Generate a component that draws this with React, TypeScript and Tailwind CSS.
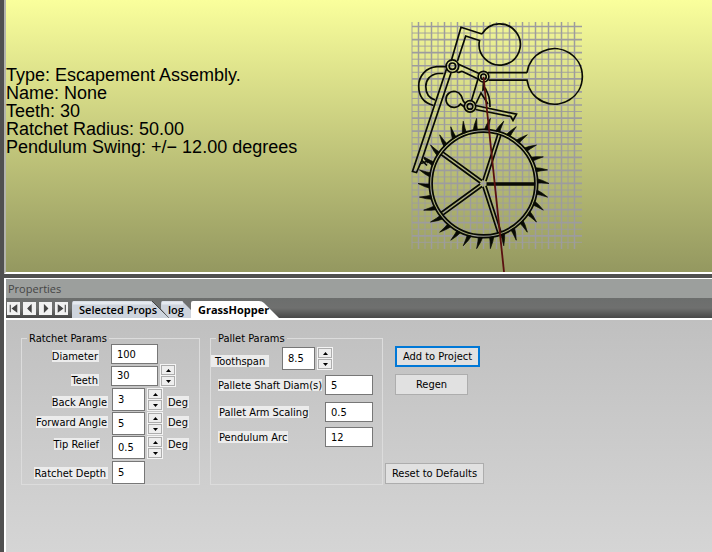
import { type ReactNode } from "react";

const ink = { fill: "none", stroke: "#080a04", strokeWidth: 1.7 };
const CX = 483.5;
const CY = 183.5;

function polar(r: number, deg: number): string {
  const a = (deg * Math.PI) / 180;
  return `${(CX + r * Math.cos(a)).toFixed(2)} ${(CY + r * Math.sin(a)).toFixed(2)}`;
}

function Grid() {
  const columns = Array.from({ length: 26 }, (_, i) => 412 + i * 6.5);
  const rows = Array.from({ length: 34 }, (_, i) => 26.5 + i * 6.54);
  return (
    <g stroke="#9d9c9e">
      {rows.map((y, i) => (
        <path key={`r${i}`} d={`M412 ${y}H582`} strokeWidth={i % 2 === 0 ? 1.7 : 0.9} />
      ))}
      {columns.map((x, i) => (
        <path key={`c${i}`} d={`M${x} 22V249`} strokeWidth={i % 2 === 1 ? 1.5 : 0.9} />
      ))}
    </g>
  );
}

function Ratchet() {
  const teeth = Array.from({ length: 30 }, (_, i) => i * 12);
  const spokes = [0, 72, 144, 216, 288];
  return (
    <g>
      <circle cx={CX} cy={CY} r={54.2} {...ink} />
      <circle cx={CX} cy={CY} r={51.4} {...ink} />
      {teeth.map((t) => (
        <path
          key={t}
          fill="#080a04"
          stroke="#080a04"
          strokeWidth={0.7}
          d={`M${polar(65.5, t)}L${polar(59, t - 3)}L${polar(54, t - 5)}L${polar(54, t - 0.5)}L${polar(58, t - 0.5)}Z`}
        />
      ))}
      {spokes.map((s) => (
        <g key={s} transform={`rotate(${s} ${CX} ${CY})`}>
          {s === 0 ? (
            <path d={`M${CX + 3} ${CY + 0.5}H${CX + 51.5}`} {...ink} strokeWidth={3.4} />
          ) : (
            <path d={`M${CX + 3} ${CY - 1.6}H${CX + 51.5}M${CX + 3} ${CY + 1.6}H${CX + 51.5}`} {...ink} />
          )}
        </g>
      ))}
    </g>
  );
}

function Escapement() {
  return (
    <svg viewBox="400 0 200 272" className="h-[272px] w-[200px] shrink-0" role="img" aria-label="Escapement assembly">
      <Grid />
      <Ratchet />
      <g {...ink}>
        <path d="M527 72.6A27.8 27.8 0 1 1 527 80.2H488.5M527 72.6H488" />
        <path d="M482 34A20.6 20.6 0 1 1 479.5 40.5L465.7 36L457.5 61M482 34L461 27.3L451.5 60" />
        <circle cx="452.4" cy="66.2" r="6.3" />
        <circle cx="452.4" cy="66.2" r="3.2" />
        <circle cx="483.5" cy="76.7" r="5.4" />
        <circle cx="483.5" cy="76.7" r="2.7" />
        <circle cx="470" cy="106.4" r="5.7" />
        <circle cx="470" cy="106.4" r="2.8" />
        <path d="M446.500 69L412.500 171.500L416.500 172.500L421.500 161L451 73" />
        <path d="M421.500 160L427 165.500M424 158L428.500 163M421 163.500L428 161" />
        <path d="M446 66.700H437C426 67.500 418.700 76 418.700 86C418.700 96 424 103 433.500 105.500" />
        <path d="M443.500 73.500H438C430 74.500 425.800 80 425.800 86.500C425.800 93 429 98 435 100" />
        <path d="M458 64L479 73.500M456.500 71.500C459 74 460 70.500 462.500 71.500L478 79L471.500 100.500" />
        <path d="M465 103C462.500 101.500 463 99 461 95.500A8 8 0 1 0 460.500 104L464.500 107" />
        <path d="M475.500 105.500L516.500 114.200L513 120.500L510.800 116.500L475.500 109.500" />
        <path d="M476 103.500L481 93L488 104M483.500 82.500L483 90L485.500 88.500C488.500 95 490 98 490 107" />
      </g>
      <path d="M483.500 77L504 272" fill="none" stroke="#5a1010" strokeWidth="1.800" />
    </svg>
  );
}

function Label({ htmlFor, children, className = "" }: { htmlFor: string; children: ReactNode; className?: string }) {
  return (
    <label htmlFor={htmlFor} className={`h-3 shrink-0 whitespace-nowrap bg-[#ececec] leading-[13px] ${className}`}>
      {children}
    </label>
  );
}

function Field({ id, value, className }: { id: string; value: string; className: string }) {
  return (
    <input
      id={id}
      defaultValue={value}
      className={`shrink-0 rounded-none border border-[#777] bg-white px-[5px] outline-none ${className}`}
    />
  );
}

function Spin({ name }: { name: string }) {
  return (
    <span className="ml-[2px] flex h-[23px] w-4 shrink-0 flex-col gap-px border border-[#f4f4f4] bg-[#f4f4f4]">
      <button aria-label={`Increase ${name}`} className="flex flex-1 items-center justify-center border border-[#adadad] bg-[#eee]">
        <svg viewBox="0 0 5 3" className="h-[3px] w-[5px]"><path d="M0 3L2.500 0L5 3Z" /></svg>
      </button>
      <button aria-label={`Decrease ${name}`} className="flex flex-1 items-center justify-center border border-[#adadad] bg-[#eee]">
        <svg viewBox="0 0 5 3" className="h-[3px] w-[5px]"><path d="M0 0L2.500 3L5 0Z" /></svg>
      </button>
    </span>
  );
}

const arrows = [
  { label: "First tab", d: "M3 2.500V9.500M9 3L5 6L9 9Z" },
  { label: "Previous tab", d: "M7.500 3L4.500 6L7.500 9Z" },
  { label: "Next tab", d: "M5 3L8 6L5 9Z" },
  { label: "Last tab", d: "M3 3L7 6L3 9ZM9.500 2.500V9.500" },
];

function Tabs() {
  return (
    <div className="flex h-[22px] items-end border-b-2 border-white bg-linear-to-b from-[#6c6e6d] via-[#6f706f] to-[#484848] pl-px">
      <div className="mb-[3px] flex shrink-0 gap-[3px]">
        {arrows.map((a) => (
          <button key={a.label} aria-label={a.label} className="h-[13px] w-[13px] bg-[#f1f1f1]">
            <svg viewBox="0 0 12 12" className="h-[13px] w-[13px]">
              <path d={a.d} fill="#444" stroke="#444" strokeWidth="1" />
            </svg>
          </button>
        ))}
      </div>
      <div
        role="tablist"
        className="ml-1 flex h-[17px] items-end whitespace-nowrap font-['Open_Sans','Noto_Sans',sans-serif] text-[11px]"
      >
        <button role="tab" aria-selected="false" className="relative h-[17px] w-[89px] shrink-0">
          <svg viewBox="0 0 97 17" className="absolute left-0 top-0 h-[17px] w-[97px]">
            <path d="M0 17V2Q0 0 2 0H77Q80 0 82 2L97 17Z" fill="#ced4dd" />
            <path d="M1 2H80" stroke="#e6eaf0" strokeWidth="3" />
            <path d="M80 0L97 17" stroke="#444" />
          </svg>
          <span className="relative block pl-[7px] text-left font-semibold leading-[17px]">Selected Props</span>
        </button>
        <button role="tab" aria-selected="false" className="relative h-[17px] w-[30px] shrink-0">
          <svg viewBox="0 0 30 17" className="absolute left-0 top-0 h-[17px] w-[30px]">
            <path d="M0 8V2Q0 0 2 0H21L30 9V17H8Z" fill="#ced4dd" />
            <path d="M1 2H22" stroke="#e6eaf0" strokeWidth="3" />
          </svg>
          <span className="relative block pl-[7px] text-left font-semibold leading-[17px]">log</span>
        </button>
        <button role="tab" aria-selected="true" className="relative h-[17px] w-[88px] shrink-0">
          <svg viewBox="0 0 88 17" className="absolute left-0 top-0 h-[17px] w-[88px]">
            <path d="M0 17V2Q0 0 2 0H68Q71 0 73 2L88 17Z" fill="#fff" />
          </svg>
          <span className="relative block pl-[7px] text-left font-bold leading-[17px]">GrassHopper</span>
        </button>
      </div>
    </div>
  );
}

function Group({ title, className, children }: { title: string; className: string; children: ReactNode }) {
  return (
    <fieldset className={`h-[152px] shrink-0 border border-[#dcdcdc] ${className}`}>
      <legend className="ml-[5px] h-[11px] px-[2px] leading-3">{title}</legend>
      {children}
    </fieldset>
  );
}

const angles = [
  { id: "back", label: "Back Angle", value: "3", end: "mr-1 pr-px", shift: "mt-1" },
  { id: "forward", label: "Forward Angle", value: "5", end: "mr-1 pr-px", shift: "mb-1" },
  { id: "relief", label: "Tip Relief", value: "0.5", end: "mr-3 pr-px", shift: "mb-2" },
];

export default function App() {
  return (
    <div className="flex min-h-screen flex-col bg-[#505050] pl-1 font-['DejaVu_Sans_Condensed','DejaVu_Sans',sans-serif] text-[11px] text-black">
      <section className="flex h-[274px] border-b-2 border-l-2 border-b-white border-l-[#b4b4ac] bg-linear-to-b from-[#faff9c] to-[#949860]">
        <div className="min-w-0 flex-1 pt-[66px] font-['Liberation_Sans',Arial,sans-serif] text-[18px] leading-[18px]">
          <p>Type: Escapement Assembly.</p>
          <p>Name: None</p>
          <p>Teeth: 30</p>
          <p>Ratchet Radius: 50.00</p>
          <p>Pendulum Swing: +/− 12.00 degrees</p>
        </div>
        <Escapement />
        <div className="w-28 shrink-0" />
      </section>

      <section className="mt-1 flex flex-1 flex-col border-l-2 border-white">
        <h2 className="h-5 border-t border-white bg-[#9c9f9d] pl-[2px] font-['Open_Sans','Noto_Sans',sans-serif] leading-[19px] text-[#454545]">
          Properties
        </h2>
        <Tabs />
        <div className="flex flex-1 items-start bg-linear-to-b from-[#c0c0c0] to-[#d5d5d5] pl-[15px] pt-[13px]">
          <Group title="Ratchet Params" className="w-[179px]">
            <div className="flex h-5 items-center">
              <span className="flex w-[89px] justify-end">
                <Label htmlFor="diameter" className="mr-3 mt-1 pr-px">Diameter</Label>
              </span>
              <Field id="diameter" value="100" className="h-5 w-[47px]" />
            </div>
            <div className="flex h-[23px] items-center">
              <span className="flex w-[89px] justify-end">
                <Label htmlFor="teeth" className="mr-3 mt-2 pr-px">Teeth</Label>
              </span>
              <Field id="teeth" value="30" className="h-5 w-[47px]" />
              <Spin name="teeth" />
            </div>
            {angles.map((a) => (
              <div key={a.id} className="mt-px flex h-[23px] items-center">
                <span className={`flex w-[90px] justify-end ${a.shift}`}>
                  <Label htmlFor={a.id} className={a.end}>{a.label}</Label>
                </span>
                <Field id={a.id} value={a.value} className="h-[23px] w-[33px]" />
                <Spin name={a.label} />
                <span className={`ml-1 h-3 bg-[#ececec] px-px leading-[13px] ${a.shift}`}>Deg</span>
              </div>
            ))}
            <div className="mt-[2px] flex h-[23px] items-center">
              <span className="flex w-[90px] justify-end">
                <Label htmlFor="depth" className="mr-1 pr-[2px]">Ratchet Depth</Label>
              </span>
              <Field id="depth" value="5" className="h-[23px] w-[33px]" />
            </div>
          </Group>

          <Group title="Pallet Params" className="ml-[10px] w-[173px] pr-[9px]">
            <div className="mt-[3px] flex h-[23px] items-center">
              <span className="flex w-[71px] pt-1">
                <Label htmlFor="span" className="px-1">Toothspan</Label>
              </span>
              <Field id="span" value="8.5" className="h-[23px] w-[33px]" />
              <Spin name="toothspan" />
            </div>
            <div className="mt-[5px] flex h-5 items-center justify-between pl-[7px]">
              <Label htmlFor="shaft">Pallete Shaft Diam(s)</Label>
              <Field id="shaft" value="5" className="h-5 w-12" />
            </div>
            <div className="mt-[7px] flex h-5 items-center justify-between pl-[7px]">
              <Label htmlFor="scaling" className="px-px">Pallet Arm Scaling</Label>
              <Field id="scaling" value="0.5" className="h-5 w-12" />
            </div>
            <div className="mt-[5px] flex h-5 items-center justify-between pl-[7px]">
              <Label htmlFor="arc" className="px-px">Pendulum Arc</Label>
              <Field id="arc" value="12" className="h-5 w-12" />
            </div>
          </Group>

          <div className="ml-[2px] flex shrink-0 flex-col items-start pt-[13px]">
            <button className="ml-[10px] h-[21px] w-[85px] border-2 border-[#0078d7] bg-[#e1e1e1] pt-px">Add to Project</button>
            <button className="ml-[10px] mt-[7px] h-[21px] w-[73px] border border-[#adadad] bg-[#e1e1e1] pt-px">Regen</button>
            <button className="mt-[68px] h-[21px] w-[99px] border border-[#adadad] bg-[#e1e1e1] pt-px">Reset to Defaults</button>
          </div>
        </div>
      </section>
    </div>
  );
}
